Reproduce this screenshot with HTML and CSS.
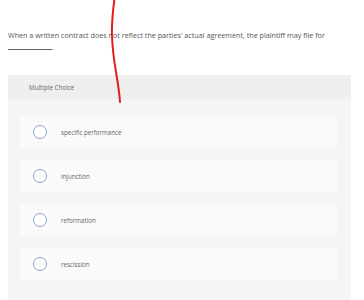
FILE: index.html
```html
<!doctype html>
<html lang="en">
  <head>
    <meta charset="UTF-8" />
    <meta name="viewport" content="width=device-width, initial-scale=1.0" />
    <title>Multiple choice question</title>
    <link rel="stylesheet" href="styles.css">
  </head>
  <body>
    <div class="question">
      <p class="prompt">
        When a written contract does not reflect the parties' actual agreement, the plaintiff may file for
        <span class="blank"></span>.
      </p>

      <div class="panel">
        <div class="panel-head">Multiple Choice</div>
        <div class="options">
          <label class="option">
            <span class="radio"></span>
            <span class="label">specific performance</span>
          </label>
          <label class="option">
            <span class="radio"></span>
            <span class="label">injunction</span>
          </label>
          <label class="option">
            <span class="radio"></span>
            <span class="label">reformation</span>
          </label>
          <label class="option">
            <span class="radio"></span>
            <span class="label">rescission</span>
          </label>
        </div>
      </div>
    </div>

    <!-- pen mark drawn over the screenshot -->
    <svg class="scribble" width="20" height="104" viewBox="0 0 20 104">
      <path d="M4.3 0 C3 10 1.5 22 2 36 C2.5 50 4 60 6 72 C8 84 9.5 94 10 102" />
    </svg>
  </body>
</html>
```

FILE: styles.css
```css
body {
  font-family: "Open Sans", Arial, sans-serif;
  margin: 0;
  padding: 0 8px;
  background: #fff;
  color: #555;
}

.question {
  width: 343px;
}

.prompt {
  margin: 0;
  padding-top: 29px;
  font-size: 7.2px;
  line-height: 12px;
  height: 46px;
}

.blank {
  display: inline-block;
  width: 44px;
  border-bottom: 1px solid #666;
  vertical-align: baseline;
}

.panel {
  background: #f5f5f5;
  padding-bottom: 20px;
}

.panel-head {
  background: #efefef;
  height: 24px;
  line-height: 26px;
  padding-left: 21px;
  font-size: 6.3px;
  color: #666;
}

.options {
  display: flex;
  flex-direction: column;
  gap: 12px;
  padding: 17px 14px 0 12px;
}

.option {
  display: flex;
  align-items: center;
  gap: 14px;
  height: 32px;
  padding-left: 13px;
  background: #fafafa;
  cursor: pointer;
}

.radio {
  width: 12px;
  height: 12px;
  border: 1px solid #8ba5c2;
  border-radius: 50%;
  background: #fff;
}

.label {
  font-size: 6.2px;
  color: #666;
}

.scribble {
  position: absolute;
  left: 110px;
  top: 0;
}

.scribble path {
  fill: none;
  stroke: #e51c1c;
  stroke-width: 2;
  stroke-linecap: round;
}
```
